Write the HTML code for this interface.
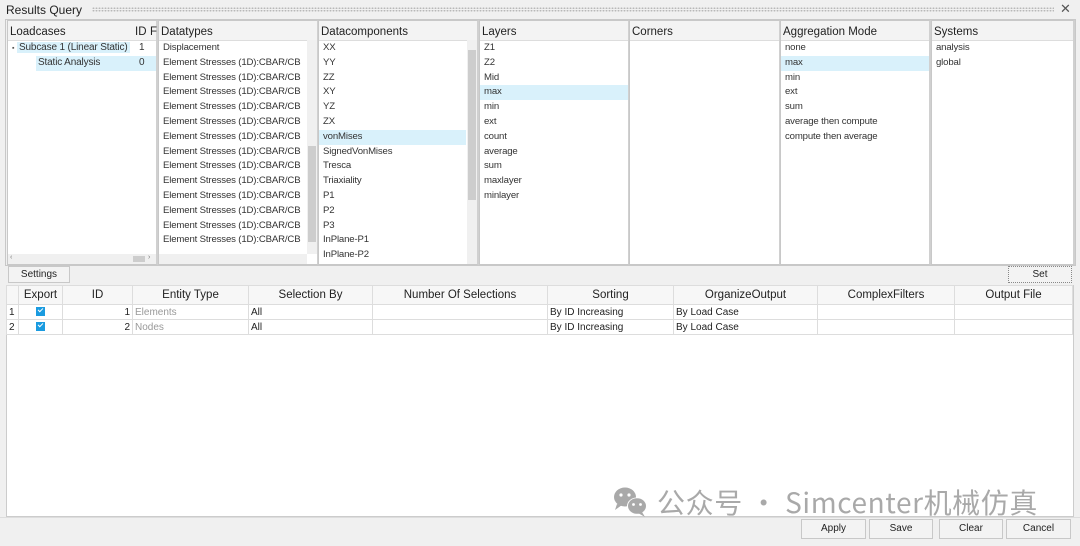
<!DOCTYPE html>
<html><head><meta charset="utf-8"><style>
*{margin:0;padding:0;box-sizing:border-box}
body{width:1080px;height:546px;background:#f0f0f0;font-family:"Liberation Sans","Noto Sans CJK SC",sans-serif;position:relative;overflow:hidden;color:#222}
.a{position:absolute}
.title{left:6px;top:3px;font-size:12px;color:#222}
.dots{left:92px;top:7px;width:962px;height:5px;background-image:radial-gradient(circle,#b8b8b8 0.8px,transparent 1px);background-size:3px 2.5px}
.close{left:1060px;top:1px;font-size:13px;color:#555}
.panel{background:#fff;border:1px solid #c8c8c8;border-right:2px solid #d0d0d0;top:20px;height:245px}
.hdr{position:absolute;left:0;right:0;top:0;height:20px;background:#f3f3f3;border-bottom:1px solid #ddd;font-size:11.5px;padding:5px 0 0 2px;color:#222}
.list{position:absolute;left:0;right:0;top:20px;font-size:9.6px;color:#333}
.list div{height:14.8px;line-height:14.8px;padding-left:4px;white-space:nowrap;overflow:hidden;letter-spacing:-0.15px}
.sel{background:#d9f1fb}
.sb{position:absolute;width:10px;background:#f0f0f0}
.thumb{position:absolute;background:#cdcdcd}
.btn{background:#f3f3f3;border:1px solid #c8c8c8;font-size:10px;text-align:center;line-height:18px;color:#222}
table{border-collapse:collapse;font-size:10px}
td,th{border:1px solid #ddd;height:15px;padding:0 2px;white-space:nowrap}
th{font-weight:normal;font-size:11.5px;height:19px;background:#f7f7f7;color:#222}
.cb{display:inline-block;width:9px;height:9px;background:#1a9be0;vertical-align:middle;position:relative}
.cb:after{content:"";position:absolute;left:2px;top:1px;width:4px;height:2px;border-left:1.2px solid #fff;border-bottom:1.2px solid #fff;transform:rotate(-45deg)}
.gray{color:#999}
</style></head><body>
<div class="a title">Results Query</div>
<div class="a dots"></div>
<div class="a close">✕</div>
<div class="a" style="left:5px;top:19px;width:1071px;height:247px;border:1px solid #c8c8c8"></div>

<div class="a panel" style="left:7px;width:151px">
 <div class="hdr">Loadcases<span style="position:absolute;left:127px;top:5px">ID</span><span style="position:absolute;left:142px;top:5px">F</span></div>
 <div class="list" style="font-size:10px">
  <div style="padding-left:4px"><span style="font-size:7px;color:#555">▪</span> <span class="sel" style="padding:0 2px">Subcase 1 (Linear Static)</span><span style="position:absolute;left:131px">1</span></div>
  <div style="padding-left:28px"><span class="sel" style="display:inline-block;width:122px;padding-left:2px">Static Analysis<span style="position:absolute;left:131px">0</span></span></div>
 </div>
 <div class="sb" style="left:0;right:0;width:auto;top:233px;height:10px;font-size:7px;color:#777">&nbsp;‹<span style="position:absolute;left:140px">›</span><div class="thumb" style="left:125px;top:2px;width:12px;height:6px"></div></div>
</div>

<div class="a panel" style="left:158px;width:161px">
 <div class="hdr">Datatypes</div>
 <div class="list" style="right:11px">
  <div>Displacement</div>
  <div>Element Stresses (1D):CBAR/CB</div><div>Element Stresses (1D):CBAR/CB</div><div>Element Stresses (1D):CBAR/CB</div><div>Element Stresses (1D):CBAR/CB</div><div>Element Stresses (1D):CBAR/CB</div><div>Element Stresses (1D):CBAR/CB</div><div>Element Stresses (1D):CBAR/CB</div><div>Element Stresses (1D):CBAR/CB</div><div>Element Stresses (1D):CBAR/CB</div><div>Element Stresses (1D):CBAR/CB</div><div>Element Stresses (1D):CBAR/CB</div><div>Element Stresses (1D):CBAR/CB</div><div>Element Stresses (1D):CBAR/CB</div>
 </div>
 <div class="sb" style="left:148px;top:19px;height:214px"><div class="thumb" style="left:1px;top:106px;width:8px;height:96px"></div></div>
 <div class="sb" style="left:0;width:148px;top:233px;height:10px"></div>
</div>

<div class="a panel" style="left:318px;width:161px">
 <div class="hdr">Datacomponents</div>
 <div class="list" style="right:11px">
  <div>XX</div><div>YY</div><div>ZZ</div><div>XY</div><div>YZ</div><div>ZX</div><div class="sel">vonMises</div><div>SignedVonMises</div><div>Tresca</div><div>Triaxiality</div><div>P1</div><div>P2</div><div>P3</div><div>InPlane-P1</div><div>InPlane-P2</div>
 </div>
 <div class="sb" style="left:148px;top:19px;height:224px"><div class="thumb" style="left:1px;top:10px;width:8px;height:150px"></div></div>
</div>

<div class="a panel" style="left:479px;width:151px"><div class="hdr">Layers</div>
 <div class="list"><div>Z1</div><div>Z2</div><div>Mid</div><div class="sel">max</div><div>min</div><div>ext</div><div>count</div><div>average</div><div>sum</div><div>maxlayer</div><div>minlayer</div></div></div>
<div class="a panel" style="left:629px;width:152px"><div class="hdr">Corners</div></div>
<div class="a panel" style="left:780px;width:151px"><div class="hdr">Aggregation Mode</div>
 <div class="list"><div>none</div><div class="sel">max</div><div>min</div><div>ext</div><div>sum</div><div>average then compute</div><div>compute then average</div></div></div>
<div class="a panel" style="left:931px;width:144px"><div class="hdr">Systems</div>
 <div class="list"><div>analysis</div><div>global</div></div></div>

<div class="a btn" style="left:8px;top:266px;width:62px;height:17px;line-height:15px">Settings</div>
<div class="a btn" style="left:1008px;top:266px;width:64px;height:17px;line-height:15px;border:1px dotted #888">Set</div>

<div class="a" style="left:6px;top:285px;width:1068px;height:232px;background:#fff;border:1px solid #ccc"></div>
<table class="a" style="left:6px;top:285px;width:1067px">
<tr><th style="width:12px"></th><th style="width:44px">Export</th><th style="width:70px">ID</th><th style="width:116px">Entity Type</th><th style="width:124px">Selection By</th><th style="width:175px">Number Of Selections</th><th style="width:126px">Sorting</th><th style="width:144px">OrganizeOutput</th><th style="width:137px">ComplexFilters</th><th>Output File</th></tr>
<tr><td>1</td><td style="text-align:center"><span class="cb"></span></td><td style="text-align:right">1</td><td class="gray">Elements</td><td>All</td><td></td><td>By ID Increasing</td><td>By Load Case</td><td></td><td></td></tr>
<tr><td>2</td><td style="text-align:center"><span class="cb"></span></td><td style="text-align:right">2</td><td class="gray">Nodes</td><td>All</td><td></td><td>By ID Increasing</td><td>By Load Case</td><td></td><td></td></tr>
</table>

<svg class="a" style="left:612px;top:486px" width="40" height="32" viewBox="0 0 40 32">
<ellipse cx="13" cy="11" rx="11" ry="9.5" fill="#a9a9a9"/><path d="M5 18 L3 24 L10 19Z" fill="#a9a9a9"/>
<ellipse cx="9" cy="9" rx="1.6" ry="1.6" fill="#fff"/><ellipse cx="17" cy="9" rx="1.6" ry="1.6" fill="#fff"/>
<ellipse cx="25" cy="20" rx="10" ry="8.5" fill="#fff"/><ellipse cx="25" cy="20" rx="9" ry="7.8" fill="#a9a9a9"/><path d="M30 26 L33 31 L26 27Z" fill="#a9a9a9"/>
<circle cx="21.5" cy="18.5" r="1.4" fill="#fff"/><circle cx="28.5" cy="18.5" r="1.4" fill="#fff"/>
</svg>
<div class="a" style="left:657px;top:482px;font-size:28px;color:#a9a9a9;letter-spacing:0.6px;white-space:nowrap;font-family:'Noto Sans CJK SC','Liberation Sans',sans-serif">公众号 · Simcenter机械仿真</div>

<div class="a" style="left:0;top:517px;width:1080px;height:29px;background:#f0f0f0;border-top:1px solid #ddd"></div>
<div class="a btn" style="left:801px;top:519px;width:65px;height:20px">Apply</div>
<div class="a btn" style="left:869px;top:519px;width:64px;height:20px">Save</div>
<div class="a btn" style="left:939px;top:519px;width:64px;height:20px">Clear</div>
<div class="a btn" style="left:1006px;top:519px;width:65px;height:20px">Cancel</div>
</body></html>
